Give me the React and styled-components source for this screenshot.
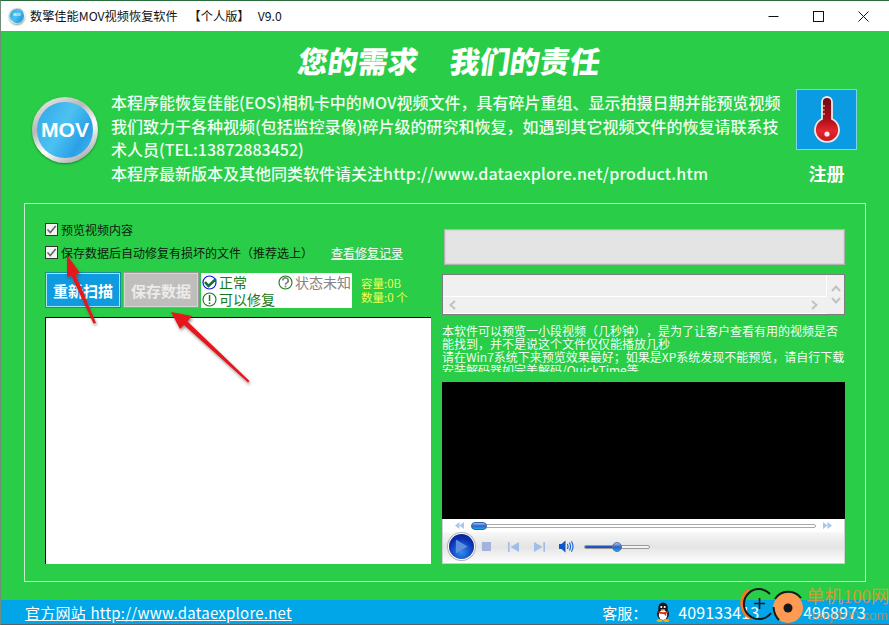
import styled, { createGlobalStyle } from "styled-components";

const GlobalStyle = createGlobalStyle`
  html, body {
    margin: 0;
    padding: 0;
    background: #27cd47;
  }
  * {
    box-sizing: border-box;
  }
`;

const FONT = `"Noto Sans CJK SC", "Liberation Sans", sans-serif`;

const Window = styled.div`
  position: relative;
  display: flex;
  flex-direction: column;
  width: 889px;
  height: 625px;
  overflow: hidden;
  border-top: 1px solid #2a6b3c;
  border-left: 1px solid #6f8f76;
  border-bottom: 1px solid #59606a;
  font-family: ${FONT};
  text-spacing-trim: space-all;
`;
const TitleBar = styled.div`
  display: flex;
  align-items: center;
  flex: 0 0 30px;
  padding-left: 8px;
  background: #fff;
  font-size: 12.2px;
  color: #111;
`;
const TitleText = styled.span`
  margin-left: 5px;
  white-space: pre;
`;
const WinButtons = styled.div`
  display: flex;
  margin-left: auto;
  padding-right: 3px;
`;
const WinButton = styled.div`
  display: flex;
  align-items: center;
  justify-content: center;
  width: 45px;
  height: 30px;
`;
const LogoRing = styled.div`
  display: flex;
  align-items: center;
  justify-content: center;
  flex: none;
  width: ${(p) => p.$size}px;
  height: ${(p) => p.$size}px;
  border-radius: 50%;
  background: linear-gradient(150deg, #f4f4f4 0%, #b8b8b8 35%, #ffffff 60%, #8d8d8d 100%);
  box-shadow: 0 1px 2px rgba(0, 60, 20, 0.5);
`;
const LogoCore = styled.div`
  display: flex;
  align-items: center;
  justify-content: center;
  width: 84%;
  height: 84%;
  border-radius: 50%;
  background: linear-gradient(120deg, #2fa5e8 0%, #4cc2f2 45%, #2a9fe6 75%, #45bdf0 100%);
  color: #fff;
  font-family: "Liberation Sans", sans-serif;
  font-weight: 700;
  font-size: ${(p) => p.$size * 0.32}px;
  line-height: 1;
`;
const Main = styled.div`
  display: flex;
  flex-direction: column;
  flex: 1;
  padding: 0 23px 18px;
  background: #29cd47;
  color: #fff;
`;
const Slogan = styled.div`
  display: flex;
  justify-content: center;
  gap: 32px;
  height: 58px;
  padding: 4px 0 0 8px;
`;
const SloganWords = styled.span`
  font-size: 30px;
  font-weight: 900;
  line-height: 50px;
  transform: skewX(-8deg);
  white-space: nowrap;
`;
const Intro = styled.div`
  display: flex;
  height: 114px;
  padding-left: 8px;
`;
const LogoSlot = styled.div`
  margin-top: 8px;
`;
const IntroText = styled.div`
  width: 685px;
  margin-left: 13px;
  padding-top: 2px;
  font-size: 16px;
  font-weight: 500;
  line-height: 23.7px;
  color: #effff3;
  white-space: nowrap;
`;
const IntroLine = styled.div``;
const IntroUrl = styled.span`
  letter-spacing: 0.2px;
`;
const Register = styled.div`
  display: flex;
  flex-direction: column;
  align-items: center;
  width: 61px;
`;
const RegisterIcon = styled.div`
  display: flex;
  align-items: center;
  justify-content: center;
  width: 61px;
  height: 61px;
  background: #0a9be2;
  border: 1px solid #7ed3ea;
`;
const RegisterLabel = styled.div`
  margin-top: 10px;
  font-size: 18px;
  font-weight: 700;
  line-height: 26px;
`;
const Panel = styled.div`
  display: flex;
  flex: 1;
  gap: 11px;
  padding: 19px 19px 17px 20px;
  border: 1px solid #c4ecce;
`;
const LeftCol = styled.div`
  display: flex;
  flex-direction: column;
  width: 386px;
`;
const CheckRow = styled.div`
  display: flex;
  align-items: center;
  height: 12px;
  margin-bottom: 11px;
  font-size: 12px;
  color: #0c1a10;
  white-space: nowrap;
`;
const CheckBox = styled.span`
  display: flex;
  align-items: center;
  justify-content: center;
  flex: none;
  width: 13px;
  height: 13px;
  margin-right: 3px;
  background: #f3f3f3;
  border: 1px solid #333;
`;
const RecordLink = styled.span`
  margin-left: 18px;
  color: #f2fff4;
  text-decoration: underline;
  text-shadow: 0 0 1px #7b9c82;
`;
const ButtonRow = styled.div`
  display: flex;
  align-items: center;
  gap: 2px;
  margin-top: 3px;
  height: 36px;
`;
const ActionButton = styled.div`
  display: flex;
  align-items: center;
  justify-content: center;
  width: 76px;
  height: 36px;
  background: ${(p) => (p.$muted ? "#c0bebc" : "#0e9be0")};
  border: 1px solid ${(p) => (p.$muted ? "#9c9a98" : "#148d9e")};
  box-shadow: inset 0 0 0 1px ${(p) => (p.$muted ? "#d8d6d4" : "#a8e4f2")};
  color: ${(p) => (p.$muted ? "#ecebe9" : "#fff")};
  font-size: 15px;
  font-weight: 700;
`;
const Legend = styled.div`
  display: grid;
  grid-template-columns: 76px 74px;
  grid-auto-rows: 17px;
  width: 151px;
  height: 35px;
  padding: 1px 0 0 1px;
  background: #fff;
  font-size: 14px;
  line-height: 17px;
`;
const LegendItem = styled.div`
  display: flex;
  align-items: center;
  gap: 2px;
  color: ${(p) => (p.$gray ? "#858585" : "#157a1b")};
  white-space: nowrap;
`;
const Stats = styled.div`
  margin-left: 7px;
  font-size: 11.5px;
  line-height: 14px;
  color: #f0ff50;
  white-space: nowrap;
`;
const FileList = styled.div`
  flex: 1;
  margin-top: 9px;
  background: #fff;
  border-top: 1px solid #000;
  border-left: 1px solid #000;
`;
const RightCol = styled.div`
  display: flex;
  flex-direction: column;
  width: 403px;
`;
const ProgressBox = styled.div`
  flex: none;
  height: 36px;
  margin: 6px 0 0 2px;
  background: #e4e4e4;
  border: 1px solid #b3b3b3;
  box-shadow: inset 0 0 0 1px #d6d6d6;
`;
const LogBox = styled.div`
  display: grid;
  grid-template-columns: 1fr 17px;
  grid-template-rows: 1fr 17px;
  flex: none;
  height: 41px;
  margin-top: 9px;
  background: #f0f0f0;
  border: 1px solid #7d7d7d;
`;
const LogBody = styled.div`
  border-right: 1px solid #fff;
  border-bottom: 1px solid #fff;
`;
const VScroll = styled.div`
  display: flex;
  flex-direction: column;
  align-items: center;
  justify-content: center;
  gap: 1px;
  grid-row: span 2;
`;
const HScroll = styled.div`
  display: flex;
  align-items: center;
  justify-content: space-between;
  padding: 0 8px 0 5px;
  border-bottom: 1px solid #fff;
`;
const Notice = styled.div`
  flex: none;
  height: 48px;
  margin-top: 9px;
  overflow: hidden;
  font-size: 12px;
  line-height: 13px;
  color: #f2fff4;
`;
const VideoArea = styled.div`
  flex: none;
  height: 137px;
  margin-top: 10px;
  background: #000;
`;
const Player = styled.div`
  display: flex;
  flex-direction: column;
  flex: 1;
  background: linear-gradient(
    #ffffff 0%,
    #ffffff 28%,
    #f6f6f6 32%,
    #e4e4e4 64%,
    #ededed 75%,
    #fdfdfd 100%
  );
  border: 1px solid #cfcfcf;
  border-top: none;
`;
const SeekRow = styled.div`
  display: flex;
  align-items: center;
  height: 13px;
  padding: 0 12px;
`;
const SeekTrack = styled.div`
  position: relative;
  flex: 1;
  height: 4px;
  margin: 0 7px;
  background: #fff;
  border: 1px solid #a9a9a9;
  border-radius: 2px;
`;
const SeekThumb = styled.div`
  position: absolute;
  top: -3px;
  left: -1px;
  width: 16px;
  height: 8px;
  background: linear-gradient(#9fc1ee, #2c62c8 50%, #25a4ee);
  border: 1px solid #355ea8;
  border-radius: 4px;
`;
const ControlRow = styled.div`
  display: flex;
  align-items: center;
  flex: 1;
  padding: 0 0 2px 6px;
`;
const PlayButton = styled.div`
  display: flex;
  align-items: center;
  justify-content: center;
  width: 25px;
  height: 25px;
  border-radius: 50%;
  background: radial-gradient(circle at 50% 72%, #2f8ef0 0%, #0b2fb4 60%, #061c7c 100%);
  box-shadow: 0 0 0 1px #fff, 0 0 0 2px #b2b2b2;
`;
const PlayerIcon = styled.svg`
  display: block;
  flex: none;
  margin-left: ${(p) => p.$gap}px;
`;
const VolumeTrack = styled.div`
  position: relative;
  width: 66px;
  height: 4px;
  margin-left: 10px;
  background: linear-gradient(90deg, #1f52c4 0 50%, #f4f4f4 50% 100%);
  border: 1px solid #999;
  border-radius: 2px;
`;
const VolumeThumb = styled.div`
  position: absolute;
  top: -4px;
  left: 27px;
  width: 10px;
  height: 10px;
  border-radius: 50%;
  background: linear-gradient(#a9c1e6, #2a5fc4 50%, #28a2ea);
  border: 1px solid #56749f;
`;
const StatusBar = styled.div`
  display: flex;
  align-items: center;
  flex: 0 0 23px;
  padding: 0 23px 0 24px;
  background: #00a6e8;
  color: #fff;
  font-size: 15px;
  white-space: nowrap;
`;
const SiteLink = styled.span`
  text-decoration: underline;
  word-spacing: 1px;
  letter-spacing: 0.23px;
`;
const Contact = styled.div`
  display: flex;
  align-items: center;
  margin-left: auto;
`;
const ContactNumber = styled.span`
  margin: 0 ${(p) => p.$after}px 0 7px;
  font-size: 16px;
  letter-spacing: 0.1px;
`;
const Penguin = styled.svg`
  display: block;
  flex: none;
  margin-left: ${(p) => p.$gap || 0}px;
`;
const ArrowLayer = styled.svg`
  position: absolute;
  top: -1px;
  left: -1px;
  pointer-events: none;
`;
const WatermarkIcons = styled.svg`
  position: absolute;
  top: 584px;
  left: 738px;
  pointer-events: none;
`;
const WatermarkText = styled.div`
  position: absolute;
  top: 585px;
  left: 805px;
  width: 82px;
  color: rgba(255, 140, 60, 0.82);
  line-height: 1;
  white-space: nowrap;
`;
const WatermarkTitle = styled.div`
  font-family: "Liberation Serif", "Noto Sans CJK SC", serif;
  font-size: 18.5px;
  line-height: 23px;
`;
const WatermarkUrl = styled.div`
  font-family: "Liberation Sans", sans-serif;
  font-size: 13.5px;
  line-height: 14px;
  padding-left: 2px;
  opacity: 0.8;
`;

const Tick = () => (
  <svg width="11" height="11" viewBox="0 0 11 11">
    <path d="M1.5 5.5 L4.3 8.5 L9.7 2" fill="none" stroke="#666" strokeWidth="1.6" />
  </svg>
);

const Chevron = ({ points }) => (
  <svg width="10" height="10" viewBox="0 0 10 10">
    <polyline points={points} fill="none" stroke="#c2c2c2" strokeWidth="2" />
  </svg>
);

const QQ = ({ gap }) => (
  <Penguin $gap={gap} width="16" height="20" viewBox="0 0 16 20">
    <ellipse cx="8" cy="6" rx="4.8" ry="5.6" fill="#151515" />
    <ellipse cx="8" cy="12" rx="6" ry="6" fill="#151515" />
    <ellipse cx="8" cy="13" rx="4.2" ry="5" fill="#fff" />
    <circle cx="6.3" cy="5" r="1.1" fill="#fff" />
    <circle cx="9.7" cy="5" r="1.1" fill="#fff" />
    <path d="M5.6 7.2 H10.4 L8 9 Z" fill="#f6b21a" />
    <path d="M3 9.2 Q8 11.4 13 9.2 L13 11 L11 11.6 L11.4 14.5 L9 12 Q6 12.4 3.4 11 Z" fill="#e0261c" />
    <ellipse cx="4.6" cy="18.4" rx="3" ry="1.5" fill="#f6a81a" />
    <ellipse cx="11.4" cy="18.4" rx="3" ry="1.5" fill="#f6a81a" />
  </Penguin>
);

const App = () => {
  return (
    <>
      <GlobalStyle />
      <Window>
        <TitleBar>
          <LogoRing $size={16}>
            <LogoCore $size={10}>MOV</LogoCore>
          </LogoRing>
          <TitleText>数擎佳能MOV视频恢复软件    【个人版】   V9.0</TitleText>
          <WinButtons>
            <WinButton>
              <svg width="11" height="11" viewBox="0 0 11 11">
                <path d="M0.5 5.5 H10.5" stroke="#111" strokeWidth="1" />
              </svg>
            </WinButton>
            <WinButton>
              <svg width="11" height="11" viewBox="0 0 11 11">
                <rect x="0.5" y="0.5" width="10" height="10" fill="none" stroke="#111" />
              </svg>
            </WinButton>
            <WinButton>
              <svg width="11" height="11" viewBox="0 0 11 11">
                <path d="M0.5 0.5 L10.5 10.5 M10.5 0.5 L0.5 10.5" stroke="#111" strokeWidth="1" />
              </svg>
            </WinButton>
          </WinButtons>
        </TitleBar>

        <Main>
          <Slogan>
            <SloganWords>您的需求</SloganWords>
            <SloganWords>我们的责任</SloganWords>
          </Slogan>

          <Intro>
            <LogoSlot>
              <LogoRing $size={66}>
                <LogoCore $size={66}>MOV</LogoCore>
              </LogoRing>
            </LogoSlot>
            <IntroText>
              <IntroLine>本程序能恢复佳能(EOS)相机卡中的MOV视频文件，具有碎片重组、显示拍摄日期并能预览视频</IntroLine>
              <IntroLine>我们致力于各种视频(包括监控录像)碎片级的研究和恢复，如遇到其它视频文件的恢复请联系技</IntroLine>
              <IntroLine>术人员(TEL:13872883452)</IntroLine>
              <IntroLine>
                本程序最新版本及其他同类软件请关注<IntroUrl>http://www.dataexplore.net/product.htm</IntroUrl>
              </IntroLine>
            </IntroText>
            <Register>
              <RegisterIcon>
                <svg width="38" height="48" viewBox="0 0 38 48">
                  <defs>
                    <linearGradient id="thermo" x1="0" y1="0" x2="0" y2="1">
                      <stop offset="0" stopColor="#6e0a12" />
                      <stop offset="0.5" stopColor="#a90f1b" />
                      <stop offset="0.75" stopColor="#e4262f" />
                      <stop offset="1" stopColor="#c9161f" />
                    </linearGradient>
                  </defs>
                  <path
                    d="M14 6 A5 5 0 0 1 24 6 V23 A12 12 0 1 1 14 23 Z"
                    fill="url(#thermo)"
                    stroke="#f6e6e6"
                    strokeWidth="1.8"
                  />
                  <path d="M14.5 10 H17 M14.5 14 H16.5 M14.5 18 H17" stroke="#f6e6e6" strokeWidth="1.2" />
                  <circle cx="19" cy="38" r="2.6" fill="#fbe9e9" />
                </svg>
              </RegisterIcon>
              <RegisterLabel>注册</RegisterLabel>
            </Register>
          </Intro>

          <Panel>
            <LeftCol>
              <CheckRow>
                <CheckBox>
                  <Tick />
                </CheckBox>
                预览视频内容
              </CheckRow>
              <CheckRow>
                <CheckBox>
                  <Tick />
                </CheckBox>
                保存数据后自动修复有损坏的文件（推荐选上）
                <RecordLink>查看修复记录</RecordLink>
              </CheckRow>
              <ButtonRow>
                <ActionButton>重新扫描</ActionButton>
                <ActionButton $muted>保存数据</ActionButton>
                <Legend>
                  <LegendItem>
                    <svg width="15" height="15" viewBox="0 0 15 15">
                      <circle cx="7.5" cy="7.5" r="6.5" fill="#fff" stroke="#1414d8" strokeWidth="1.2" />
                      <path d="M3 7 L6.5 11 L14 4" fill="none" stroke="#0f6f3c" strokeWidth="2.6" />
                    </svg>
                    正常
                  </LegendItem>
                  <LegendItem $gray>
                    <svg width="15" height="15" viewBox="0 0 15 15">
                      <circle cx="7.5" cy="7.5" r="6.5" fill="#fff" stroke="#157a1b" strokeWidth="1.1" />
                      <path
                        d="M4.8 5.6 A2.7 2.7 0 1 1 8.6 8 Q7.5 8.5 7.5 9.8"
                        fill="none"
                        stroke="#858585"
                        strokeWidth="1.8"
                      />
                      <rect x="6.6" y="10.6" width="1.8" height="1.8" fill="#858585" />
                    </svg>
                    状态未知
                  </LegendItem>
                  <LegendItem>
                    <svg width="15" height="15" viewBox="0 0 15 15">
                      <circle cx="7.5" cy="7.5" r="6.5" fill="#fff" stroke="#157a1b" strokeWidth="1.1" />
                      <rect x="6.8" y="3" width="1.5" height="6" fill="#157a1b" />
                      <rect x="6.8" y="10.4" width="1.5" height="1.6" fill="#157a1b" />
                    </svg>
                    可以修复
                  </LegendItem>
                </Legend>
                <Stats>
                  容量:0B
                  <br />
                  数量:0 个
                </Stats>
              </ButtonRow>
              <FileList />
            </LeftCol>

            <RightCol>
              <ProgressBox />
              <LogBox>
                <LogBody />
                <VScroll>
                  <Chevron points="1,7 5,2.5 9,7" />
                  <Chevron points="1,3 5,7.5 9,3" />
                </VScroll>
                <HScroll>
                  <Chevron points="7,1 2.5,5 7,9" />
                  <Chevron points="3,1 7.5,5 3,9" />
                </HScroll>
              </LogBox>
              <Notice>
                本软件可以预览一小段视频（几秒钟），是为了让客户查看有用的视频是否能找到，并不是说这个文件仅仅能播放几秒
                <br />
                请在Win7系统下来预览效果最好；如果是XP系统发现不能预览，请自行下载安装解码器如完美解码/QuickTime等
              </Notice>
              <VideoArea />
              <Player>
                <SeekRow>
                  <svg width="9" height="7" viewBox="0 0 9 7">
                    <path d="M4.5 0 V7 L0 3.5 Z M9 0 V7 L4.5 3.5 Z" fill="#a8c6ee" />
                  </svg>
                  <SeekTrack>
                    <SeekThumb />
                  </SeekTrack>
                  <svg width="9" height="7" viewBox="0 0 9 7">
                    <path d="M0 0 V7 L4.5 3.5 Z M4.5 0 V7 L9 3.5 Z" fill="#a8c6ee" />
                  </svg>
                </SeekRow>
                <ControlRow>
                  <PlayButton>
                    <svg width="13" height="15" viewBox="0 0 15 17">
                      <path d="M1 0.5 L14.5 8.5 L1 16.5 Z" fill="#5f8fe0" />
                    </svg>
                  </PlayButton>
                  <PlayerIcon $gap={8} width="9" height="9" viewBox="0 0 9 9">
                    <rect width="9" height="9" fill="#a4b2dc" />
                  </PlayerIcon>
                  <PlayerIcon $gap={17} width="11" height="10" viewBox="0 0 11 10">
                    <path d="M0 0 H1.6 V10 H0 Z M11 0 V10 L2.5 5 Z" fill="#a2bde6" />
                  </PlayerIcon>
                  <PlayerIcon $gap={15} width="11" height="10" viewBox="0 0 11 10">
                    <path d="M11 0 H9.4 V10 H11 Z M0 0 V10 L8.5 5 Z" fill="#a2bde6" />
                  </PlayerIcon>
                  <PlayerIcon $gap={14} width="15" height="13" viewBox="0 0 15 13">
                    <path d="M0 4 H2.5 L6.5 0.5 V12.5 L2.5 9 H0 Z" fill="#0d55c8" />
                    <path
                      d="M8.3 4 Q9.8 6.5 8.3 9 M10.4 2.6 Q12.7 6.5 10.4 10.4 M12.4 1.2 Q15.6 6.5 12.4 11.8"
                      fill="none"
                      stroke="#1463d4"
                      strokeWidth="1.1"
                    />
                  </PlayerIcon>
                  <VolumeTrack>
                    <VolumeThumb />
                  </VolumeTrack>
                </ControlRow>
              </Player>
            </RightCol>
          </Panel>
        </Main>

        <StatusBar>
          <SiteLink>官方网站 http://www.dataexplore.net</SiteLink>
          <Contact>
            客服：
            <QQ gap={8} />
            <ContactNumber $after={21}>409133413</ContactNumber>
            <QQ />
            <ContactNumber $after={0}>4968973</ContactNumber>
          </Contact>
        </StatusBar>

        <ArrowLayer width="889" height="625" viewBox="0 0 889 625">
          <defs>
            <filter id="arrowShadow" x="-30%" y="-30%" width="160%" height="160%">
              <feDropShadow dx="1" dy="2" stdDeviation="1.4" floodColor="#444" floodOpacity="0.6" />
            </filter>
          </defs>
          <g fill="#e5141a" filter="url(#arrowShadow)">
            <polygon points="67,255 80,273 75.5,274.5 96,323 93.5,323.5 71.5,276 67,277" />
            <polygon points="171,312 192,316 187.5,321.5 249.5,381 248,382.5 184,325 180,329" />
          </g>
        </ArrowLayer>

        <WatermarkIcons width="68" height="41" viewBox="0 0 68 41">
          <path d="M12 33 A16 16 0 0 1 10 5" fill="none" stroke="#f47a20" strokeWidth="3" />
          <path d="M31 9 A15 15 0 1 0 32 28" fill="none" stroke="#15181c" strokeWidth="2" />
          <path d="M15 18.5 H26 M20.5 13 V24" stroke="#15181c" strokeWidth="1.6" />
          <circle cx="49" cy="23" r="15" fill="#ff9a52" />
          <circle cx="49" cy="23" r="4.5" fill="#17191c" />
          <path d="M36 14 A16 16 0 0 1 62 13" fill="none" stroke="#15181c" strokeWidth="2" />
          <path d="M34.5 22 Q35 30 40 35" fill="none" stroke="#15181c" strokeWidth="2" />
        </WatermarkIcons>
        <WatermarkText>
          <WatermarkTitle>单机100网</WatermarkTitle>
          <WatermarkUrl>danji100.com</WatermarkUrl>
        </WatermarkText>
      </Window>
    </>
  );
};

export default App;
